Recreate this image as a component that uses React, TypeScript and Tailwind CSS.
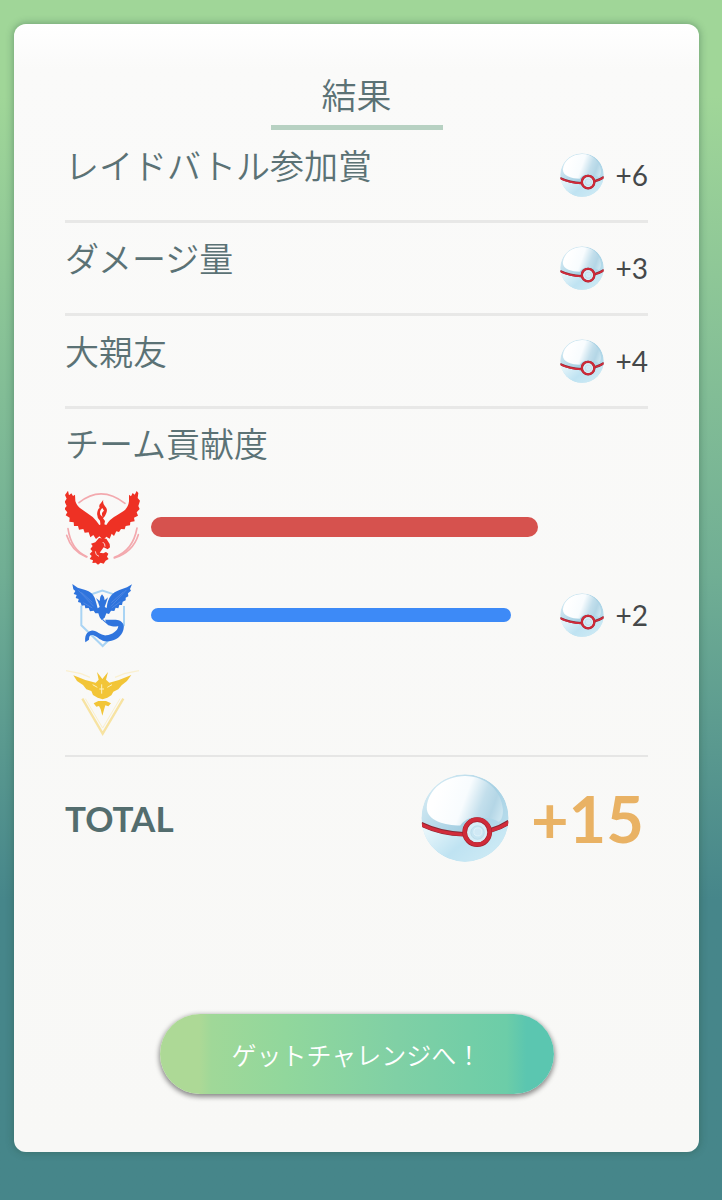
import { useId } from "react";

function PremierBall({ className }: { className: string }) {
  const id = useId();
  return (
    <svg viewBox="0 0 260 260" className={className} aria-hidden="true">
      <defs>
        <linearGradient id={`${id}base`} x1="0.1" y1="0.2" x2="0.9" y2="0.9">
          <stop offset="0" stopColor="#d0e8f2" />
          <stop offset="0.5" stopColor="#a6d0e3" />
          <stop offset="1" stopColor="#bfe2f0" />
        </linearGradient>
        <linearGradient id={`${id}top`} gradientUnits="userSpaceOnUse" x1="40" y1="70" x2="230" y2="140">
          <stop offset="0" stopColor="#ffffff" />
          <stop offset="0.42" stopColor="#f8fcfe" />
          <stop offset="0.68" stopColor="#c3dfec" />
          <stop offset="0.85" stopColor="#b4d6e6" />
          <stop offset="1" stopColor="#cbe5f0" />
        </linearGradient>
        <linearGradient id={`${id}low`} x1="0" y1="0.2" x2="1" y2="0.7">
          <stop offset="0" stopColor="#eaf7fb" />
          <stop offset="0.5" stopColor="#bfe3f2" />
          <stop offset="1" stopColor="#cfebf5" />
        </linearGradient>
        <clipPath id={`${id}clip`}>
          <circle cx="130" cy="130" r="129" />
        </clipPath>
      </defs>
      <g clipPath={`url(#${id}clip)`}>
        <circle cx="130" cy="130" r="129" fill={`url(#${id}base)`} />
        <path
          d="M17 98C22 44 70 8 130 6C194 6 238 52 242 104C243 124 238 134 230 142C218 134 206 130 168 128C140 126 128 138 116 152C72 152 16 138 17 98Z"
          fill={`url(#${id}top)`}
        />
        <path d="M0 152Q60 180 124 180L206 176Q240 162 260 146V260H0Z" fill={`url(#${id}low)`} />
        <path d="M0 148Q58 176 126 178M206 166Q236 158 260 142" fill="none" stroke="#8a2733" strokeWidth="14" />
        <path d="M0 149Q58 177 126 179M206 167Q236 159 260 143" fill="none" stroke="#d22c3b" strokeWidth="10" />
      </g>
      <circle cx="166" cy="172" r="37" fill="#d7eef7" stroke="#a5202e" strokeWidth="14" />
      <circle cx="166" cy="171" r="37" fill="none" stroke="#cf2b39" strokeWidth="11" />
      <circle cx="167" cy="173" r="20" fill="#c7e5f2" stroke="#b5d8e8" strokeWidth="2" />
      <circle cx="168" cy="171" r="12" fill="#d0e9f5" stroke="#e8f6fb" strokeWidth="2" />
    </svg>
  );
}

function ValorEmblem() {
  return (
    <svg viewBox="30 31 228 228" className="w-19 shrink-0" role="img" aria-label="Valor">
      <g fill="none" stroke="#f3a9ae" strokeLinecap="round">
        <path d="M72 72Q138 18 210 74" strokeWidth="5" />
        <path d="M39 150Q48 214 96 234" strokeWidth="5" />
        <path d="M35 170Q50 218 94 235" strokeWidth="5" />
        <path d="M246 148Q234 216 178 236" strokeWidth="5" />
        <path d="M250 168Q234 220 178 238" strokeWidth="5" />
      </g>
      <g fill="#ee3124">
        <path d="M39 36L42 50L49 44L54 52L60 48L61 67Q65 82 78 90L113 115Q126 128 133 139L143 135L154 139Q164 121 187 109L207 96Q220 86 222 68L222 48L228 53L233 43L239 48L245 37L250 43L248 58L255 66L250 82L254 91L245 101L249 111L237 117L239 128L226 130L225 140L212 142L209 152L198 151L192 160L184 158L177 172L170 165L164 180L154 174L145 184L133 173L123 181L115 169L106 176L101 161L89 162L85 151L72 153L69 142L57 142L56 131L43 129L44 117L32 110L37 101L28 90L35 82L29 69L35 60L30 49Z" />
        <path d="M145 63Q142 74 150 83Q159 91 154 103Q151 113 144 119L150 127L147 142H137L135 126Q124 117 127 100Q128 91 134 88Q130 79 138 73Z" />
        <path d="M132 178L154 180L164 196L165 206L158 212L146 206L140 214L134 222L145 224L153 220L160 225L156 234L161 241L152 246L146 255L137 252L129 258L122 252L112 253L114 245L104 241L110 232L104 226L112 218L106 211L113 202L108 195L121 191Z" />
      </g>
      <path d="M142 88Q132 96 136 108L143 115Q137 102 147 96" fill="#faf9f9" />
      <path d="M143 190Q151 195 150 204M121 218Q121 230 132 233" fill="none" stroke="#f9d5d1" strokeWidth="3" />
    </svg>
  );
}

function MysticEmblem() {
  return (
    <svg viewBox="30 24 228 195" className="w-19 shrink-0" role="img" aria-label="Mystic">
      <path d="M79 92V151L143 213L207 150V93M103 60L142 47L177 58" fill="none" stroke="#a9d4f4" strokeWidth="6" />
      <g fill="#2f74dd">
        <path d="M52 27L68 38L91 45Q112 52 119 68Q124 83 128 100L134 96L129 81L123 69L134 78L136 65L141 58L147 66L149 76L159 67L154 82L149 96L155 99Q157 76 167 63Q177 50 195 44L216 37L231 28L225 42L228 47L219 55L220 64L212 68L212 76L203 80L201 90L193 90L190 100L182 98L178 108L168 107L162 117L154 115L149 128L140 135L134 127L130 115L121 115L116 107L105 109L101 99L91 100L89 91L80 92L77 83L69 81L71 72L62 69L65 60L56 57L61 48L55 43Z" />
      </g>
      <path d="M79 52L112 82M70 46L116 94M205 51L169 83M214 45L168 94M85 83L112 99M196 80L170 99" fill="none" stroke="#5087e2" strokeWidth="3" />
      <path
        d="M142 129C146 139 165 149 179 145C188 144 192 146 191 151C186 157 174 155 160 151L142 135ZM150 134C166 136 182 131 195 137C207 144 208 155 205 165C200 184 183 196 162 199C139 202 129 186 115 181C105 178 102 184 102 194L91 202C88 184 94 170 109 167C126 165 136 183 154 181C171 179 188 169 190 154C184 149 172 153 160 150Z"
        fill="#2f74dd"
      />
    </svg>
  );
}

function InstinctEmblem() {
  return (
    <svg viewBox="30 33 228 198" className="w-19 shrink-0" role="img" aria-label="Instinct">
      <path d="M82 119L143 224L205 119" fill="none" stroke="#f7e3a2" strokeWidth="7" />
      <path d="M91 119L143 207L195 119" fill="none" stroke="#fbf0cb" strokeWidth="3" />
      <path d="M33 35L78 44L105 55M252 35L208 44L180 55" fill="none" stroke="#faf0d0" strokeWidth="4" />
      <g fill="#f2c537">
        <path d="M55 49L91 63L122 71L131 62L126 39L142 60L159 39L153 62L163 71L192 63L229 48L216 66L200 79L190 91L175 98L169 109L157 116L143 121L128 116L114 108L109 96L94 91L84 78L66 66Z" />
        <path d="M116 133L130 126H153L168 133L160 142L151 139L147 152L142 170L137 151L132 141L124 143Z" />
      </g>
      <path d="M140 76V104M133 90H147M113 77L127 85M171 77L157 85" fill="none" stroke="#fdf2bf" strokeWidth="3" />
    </svg>
  );
}

function Reward({ amount }: { amount: number }) {
  return (
    <span className="flex shrink-0 items-center gap-3 text-[28px] leading-8 text-[#454849]">
      <PremierBall className="size-11" />
      <span>+{amount}</span>
    </span>
  );
}

const rewards = [
  { label: "レイドバトル参加賞", amount: 6 },
  { label: "ダメージ量", amount: 3 },
  { label: "大親友", amount: 4 },
];

const teams = [
  { name: "valor", Emblem: ValorEmblem, share: 100, bar: "h-5 bg-[#d6524e]", amount: 0 },
  { name: "mystic", Emblem: MysticEmblem, share: 93, bar: "h-3.5 bg-[#3d8af7]", amount: 2 },
  { name: "instinct", Emblem: InstinctEmblem, share: 0, bar: "", amount: 0 },
];

export default function App() {
  return (
    <div className="min-h-screen bg-linear-to-b from-[#a0d698] from-8% via-[#70ae94] via-48% to-[#46868a] to-75% pt-6 pr-[23px] pb-12 pl-3.5 font-['Lato','Noto_Sans_CJK_JP',sans-serif]">
      <main className="flex flex-col rounded-xl bg-linear-to-b from-white via-[#fafaf9] via-4% to-[#f8f8f6] px-[51px] pb-[58px] text-[#5b7275] shadow-[0_0_7px_1px_#28504060]">
        <h1 className="mt-[45px] w-43 self-center border-b-5 border-[#b7d1c2] pb-1 text-center text-[35px] leading-[52px] font-[350]">
          結果
        </h1>
        <ul>
          {rewards.map(({ label, amount }) => (
            <li key={label} className="flex h-[93px] items-center justify-between border-b-3 border-[#e8e8e7]">
              <span className="pb-[18px] text-[34px] leading-10 font-[350]">{label}</span>
              <Reward amount={amount} />
            </li>
          ))}
        </ul>
        <section className="border-b-2 border-[#e6e6e5] pb-2">
          <h2 className="pt-[15px] pb-[19px] text-[34px] leading-10 font-[350]">チーム貢献度</h2>
          <ul>
            {teams.map(({ name, Emblem, share, bar, amount }) => (
              <li key={name} className="flex h-22 items-center">
                <Emblem />
                <div className="ml-2.5 flex-1">
                  {share > 0 && <div className={`rounded-full ${bar}`} style={{ width: `${share}%` }} />}
                </div>
                <div className="flex w-[110px] justify-end">{amount > 0 && <Reward amount={amount} />}</div>
              </li>
            ))}
          </ul>
        </section>
        <div className="flex h-[122px] items-center justify-between font-bold">
          <span className="text-[35px] leading-10 text-[#536d6e]">TOTAL</span>
          <span className="flex items-center gap-[22px] pr-1 text-[65px] leading-20 text-[#e9b264]">
            <PremierBall className="size-22" />
            <span>+15</span>
          </span>
        </div>
        <button
          type="button"
          className="mt-[135px] h-20 w-full max-w-[394px] self-center rounded-full bg-[linear-gradient(90deg,#add996_0%,#add996_10%,#a0d898_13%,#91d79c_32%,#80d0a5_60%,#6ccda8_88%,#5bc6b0_93%,#5bc6b0_100%)] pt-1 text-[25px] font-[350] text-white shadow-[0_2px_5px_1px_#00000070]"
        >
          ゲットチャレンジへ！
        </button>
      </main>
    </div>
  );
}
